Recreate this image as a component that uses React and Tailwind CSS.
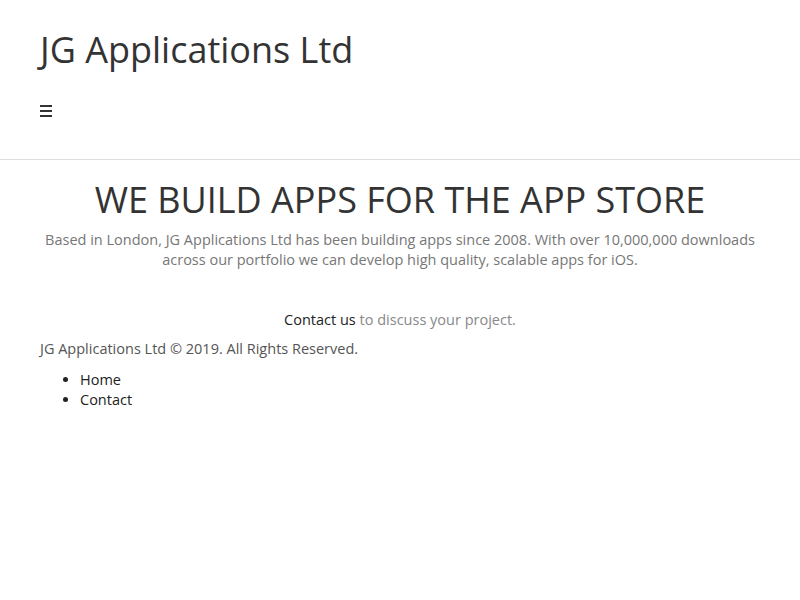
export default function App() {
  return (
    <div className="min-h-screen bg-white font-['Open_Sans',sans-serif] text-[14.5px] text-[#333]">
      <header className="h-[160px] border-b border-[#ddd] bg-white px-10 pt-[26px]">
        <h1 className="text-[36px] leading-[48px] text-[#333]">JG Applications Ltd</h1>
        <div className="mt-[31px] flex h-[12px] w-[12px] flex-col justify-between">
          <span className="h-[2px] bg-[#333]" />
          <span className="h-[2px] bg-[#333]" />
          <span className="h-[2px] bg-[#333]" />
        </div>
      </header>

      <section className="px-10 pt-[16px] text-center">
        <h2 className="text-[36px] leading-[48px] text-[#333]">WE BUILD APPS FOR THE APP STORE</h2>
        <p className="mt-[6px] leading-[20px] text-[#777]">
          Based in London, JG Applications Ltd has been building apps since 2008. With over 10,000,000 downloads
          across our portfolio we can develop high quality, scalable apps for iOS.
        </p>
        <p className="mt-[40px] leading-[20px] text-[#888]">
          <a href="#" className="text-[#222]">Contact us</a> to discuss your project.
        </p>
      </section>

      <footer className="px-10 pt-[9px] leading-[20px]">
        <p className="text-[#555]">JG Applications Ltd &copy; 2019. All Rights Reserved.</p>
        <ul className="mt-[11px] list-disc pl-10 text-[#222]">
          <li>Home</li>
          <li>Contact</li>
        </ul>
      </footer>
    </div>
  );
}
